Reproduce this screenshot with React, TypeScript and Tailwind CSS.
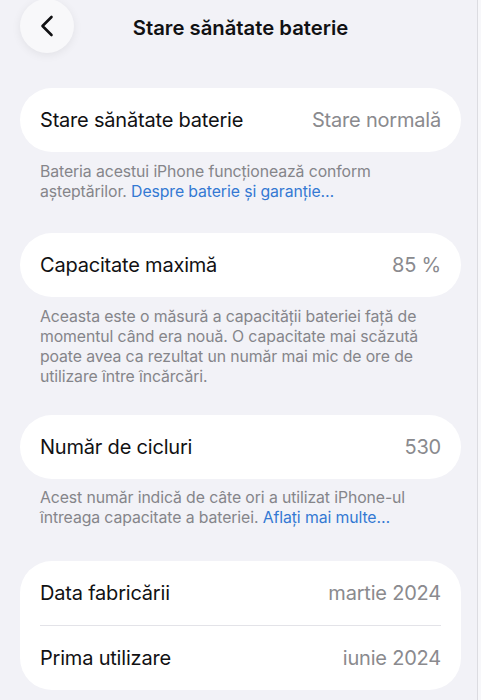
import { ReactNode } from "react"

const font = { fontFamily: "Inter, 'Noto Sans', sans-serif" }

function Row({ label, value }: { label: string; value: string }) {
  return (
    <div className="flex h-16 items-center justify-between px-5">
      <span className="text-[20px] tracking-[-0.2px] text-[#111113]">{label}</span>
      <span className="text-[20px] tracking-[-0.2px] text-[#8a8a8e]">{value}</span>
    </div>
  )
}

function Card({ children, className = "" }: { children: ReactNode; className?: string }) {
  return <div className={`rounded-[32px] bg-white ${className}`}>{children}</div>
}

function Note({ children, className = "" }: { children: ReactNode; className?: string }) {
  return (
    <p className={`px-5 text-[15.8px] leading-5 tracking-[-0.1px] text-[#85858a] ${className}`}>
      {children}
    </p>
  )
}

function Link({ children }: { children: ReactNode }) {
  return <span className="text-[#3479d3]">{children}</span>
}

export default function App() {
  return (
    <div className="flex h-[700px] w-[481px] overflow-hidden bg-[#f2f2f7]" style={font}>
      <div className="flex-1 pl-5 pr-4">
        {/* Header */}
        <div className="grid h-[88px] grid-cols-[1fr_auto_1fr] items-start">
          <button
            type="button"
            className="-mt-[1px] flex h-[54px] w-[54px] items-center justify-center rounded-full bg-[#f8f8fa] shadow-[0_2px_10px_rgba(0,0,0,0.07)]"
          >
            <svg width="16" height="22" viewBox="0 0 16 22" fill="none">
              <path d="M12.5 2 L3.5 11 L12.5 20" stroke="#111113" strokeWidth="2.6" strokeLinecap="round" strokeLinejoin="round" />
            </svg>
          </button>
          <h1 className="pt-[13px] text-[20.3px] font-semibold text-[#111113]">
            Stare sănătate baterie
          </h1>
          <div />
        </div>

        <Card>
          <Row label="Stare sănătate baterie" value="Stare normală" />
        </Card>
        <Note className="mt-[10px]">
          Bateria acestui iPhone funcționează conform așteptărilor. <Link>Despre baterie și garanție…</Link>
        </Note>

        <Card className="mt-[31px]">
          <Row label="Capacitate maximă" value="85 %" />
        </Card>
        <Note className="mt-[10px]">
          Aceasta este o măsură a capacității bateriei față de momentul când era nouă. O capacitate mai scăzută poate avea ca rezultat un număr mai mic de ore de utilizare între încărcări.
        </Note>

        <Card className="mt-[28px]">
          <Row label="Număr de cicluri" value="530" />
        </Card>
        <Note className="mt-[9px]">
          Acest număr indică de câte ori a utilizat iPhone-ul întreaga capacitate a bateriei. <Link>Aflați mai multe…</Link>
        </Note>

        <Card className="mt-[33px] rounded-[30px]">
          <Row label="Data fabricării" value="martie 2024" />
          <div className="mx-5 h-px bg-[#e3e3e8]" />
          <Row label="Prima utilizare" value="iunie 2024" />
        </Card>
      </div>
      <div className="w-px bg-[#dcdce1]" />
      <div className="w-[3px] bg-[#f7f7fa]" />
    </div>
  )
}
